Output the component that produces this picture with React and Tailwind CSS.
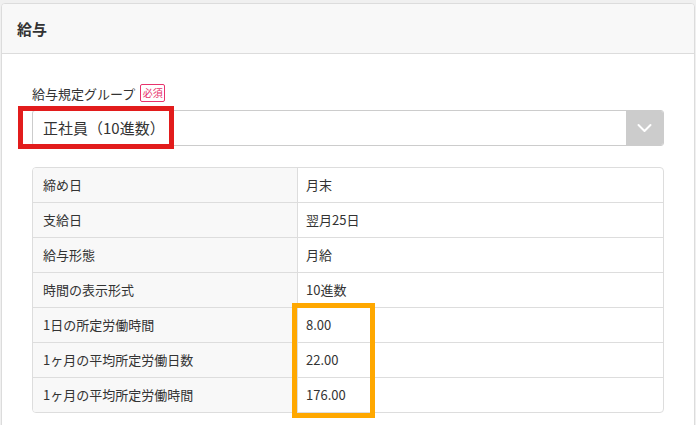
import React from "react";

const rows = [
  ["締め日", "月末"],
  ["支給日", "翌月25日"],
  ["給与形態", "月給"],
  ["時間の表示形式", "10進数"],
  ["1日の所定労働時間", "8.00"],
  ["1ヶ月の平均所定労働日数", "22.00"],
  ["1ヶ月の平均所定労働時間", "176.00"],
];

export default function App() {
  return (
    <div
      className="relative w-[696px] h-[425px] overflow-hidden bg-[#f0f0f0] pt-[3px] pl-[1px] pr-[1px] text-[#333]"
      style={{ fontFamily: '"Noto Sans CJK JP", "Noto Sans", sans-serif' }}
    >
      <div className="w-[694px] h-[440px] rounded-[4px] border border-[#dcdcdc] bg-white overflow-hidden">
        <div className="h-[50px] flex items-center pl-[15px] bg-[#f8f8f8] border-b border-[#dcdcdc]">
          <span className="text-[15px] font-bold leading-none">給与</span>
        </div>
        <div className="px-[30px] pt-[30px]">
          <div className="flex items-center gap-[5px] h-[18px]">
            <span className="text-[13px] leading-none">給与規定グループ</span>
            <span className="h-[18px] w-[25px] flex items-center justify-center border border-[#e8336d] rounded-[2px] text-[10px] leading-none text-[#e8336d]">
              必須
            </span>
          </div>
          <div className="mt-[8px] flex h-[36px] rounded-[3px] border border-[#cccccc] overflow-hidden">
            <div className="flex-1 flex items-center pl-[10px] text-[15px]">正社員（10進数）</div>
            <div className="w-[37px] bg-[#cccccc] flex items-center justify-center">
              <svg width="15" height="10" viewBox="0 0 15 10" fill="none">
                <path d="M1.5 2 L7.5 8 L13.5 2" stroke="white" strokeWidth="2" strokeLinecap="round" strokeLinejoin="round" />
              </svg>
            </div>
          </div>
          <div className="mt-[21px] rounded-[4px] border border-[#dddddd] overflow-hidden">
            {rows.map(([k, v], i) => (
              <div
                key={k}
                className={
                  i === 0
                    ? "flex h-[34px] text-[13px]"
                    : "flex h-[35px] text-[13px] border-t border-[#dddddd]"
                }
              >
                <div className="w-[265px] shrink-0 bg-[#f8f8f8] border-r border-[#dddddd] flex items-center pl-[10px]">
                  {k}
                </div>
                <div className="flex-1 flex items-center pl-[8px]">{v}</div>
              </div>
            ))}
          </div>
        </div>
      </div>
      <div className="absolute left-[18px] top-[106px] w-[156px] h-[43px] border-[5px] border-[#e21c1c]" />
      <div className="absolute left-[292px] top-[303px] w-[83px] h-[115px] border-[5px] border-[#ffa800]" />
    </div>
  );
}
